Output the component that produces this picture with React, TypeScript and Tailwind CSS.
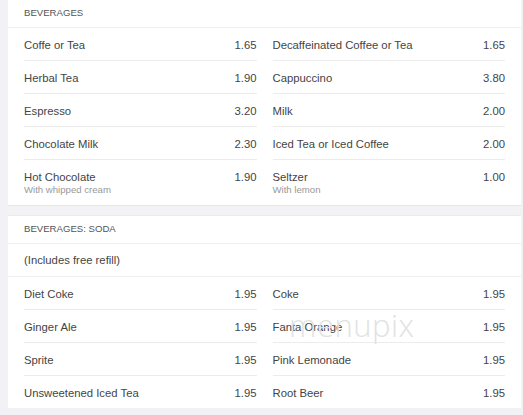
import React from "react";

type Item = { name: string; price: string; sub?: string };

const bev: Item[] = [
  { name: "Coffe or Tea", price: "1.65" },
  { name: "Decaffeinated Coffee or Tea", price: "1.65" },
  { name: "Herbal Tea", price: "1.90" },
  { name: "Cappuccino", price: "3.80" },
  { name: "Espresso", price: "3.20" },
  { name: "Milk", price: "2.00" },
  { name: "Chocolate Milk", price: "2.30" },
  { name: "Iced Tea or Iced Coffee", price: "2.00" },
  { name: "Hot Chocolate", price: "1.90", sub: "With whipped cream" },
  { name: "Seltzer", price: "1.00", sub: "With lemon" },
];

const soda: Item[] = [
  { name: "Diet Coke", price: "1.95" },
  { name: "Coke", price: "1.95" },
  { name: "Ginger Ale", price: "1.95" },
  { name: "Fanta Orange", price: "1.95" },
  { name: "Sprite", price: "1.95" },
  { name: "Pink Lemonade", price: "1.95" },
  { name: "Unsweetened Iced Tea", price: "1.95" },
  { name: "Root Beer", price: "1.95" },
];

function Cell({ item, last }: { item: Item; last: boolean }) {
  return (
    <div
      className={
        "flex justify-between pt-[10px] " +
        (last ? (item.sub ? "pb-[9px]" : "h-[32px]") : "h-[33px] border-b border-[#ececec]")
      }
    >
      <div className="flex flex-col">
        <span className="text-[11.3px] leading-[14px] text-[#444]">{item.name}</span>
        {item.sub && (
          <span className="text-[9.6px] leading-[12px] text-[#999]">{item.sub}</span>
        )}
      </div>
      <span className="text-[11.3px] leading-[14px] text-[#444]">{item.price}</span>
    </div>
  );
}

function Grid({ items }: { items: Item[] }) {
  return (
    <div className="grid grid-cols-2 gap-x-4 px-4">
      {items.map((it, i) => (
        <Cell key={i} item={it} last={i >= items.length - 2} />
      ))}
    </div>
  );
}

export default function App() {
  return (
    <div
      className="w-[523px] h-[415px] bg-[#f2f2f6] pl-[8px] pr-[2px] overflow-hidden"
      style={{ fontFamily: '"Liberation Sans", Arial, sans-serif' }}
    >
      <div className="bg-white border-b border-[#e6e6ea]">
        <div className="h-[28px] flex items-center px-4 border-b border-[#efefef] text-[9.6px] text-[#555] uppercase">
          Beverages
        </div>
        <Grid items={bev} />
      </div>
      <div className="h-[10px] bg-[#f3f3f6] border-b border-[#ebebef]" />
      <div className="bg-white relative">
        <div className="h-[28px] flex items-center px-4 border-b border-[#efefef] text-[9.6px] text-[#555] uppercase">
          Beverages: Soda
        </div>
        <div className="h-[33px] flex items-center px-4 border-b border-[#efefef] text-[11.3px] text-[#444]">
          (Includes free refill)
        </div>
        <Grid items={soda} />
        <div
          className="absolute left-[281px] top-[94px] text-[31px] leading-none text-[#e2e2e2] pointer-events-none tracking-[0.5px]"
          style={{ fontFamily: '"Open Sans", sans-serif', fontWeight: 300 }}
        >
          menupix
        </div>
      </div>
    </div>
  );
}
